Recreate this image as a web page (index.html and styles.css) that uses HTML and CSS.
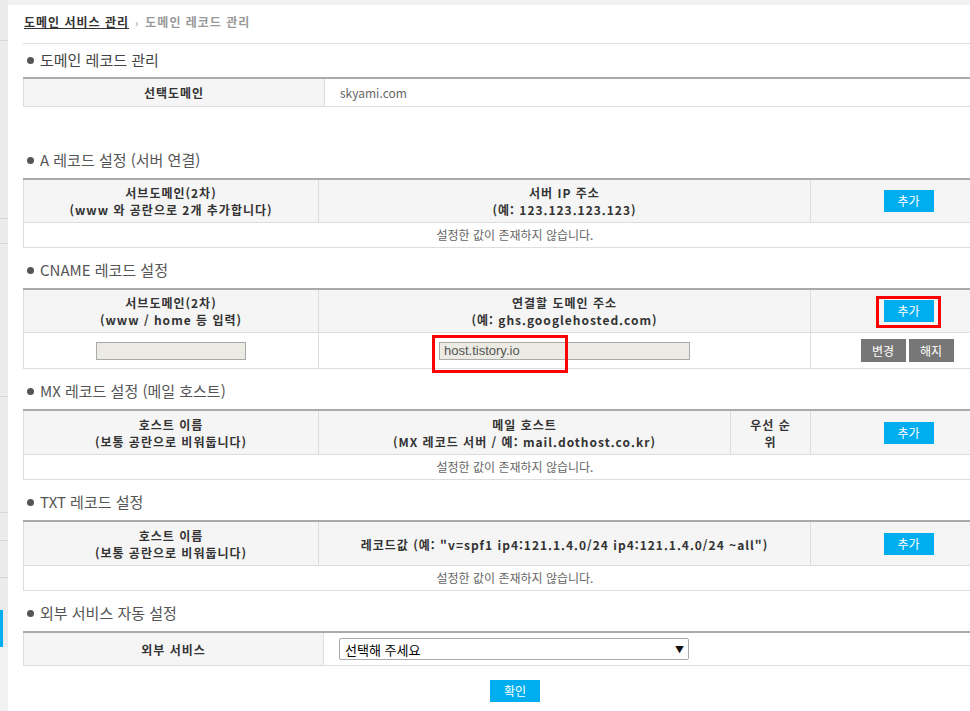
FILE: index.html
```html
<!DOCTYPE html>
<html lang="ko">
<head>
  <meta charset="UTF-8">
  <title>도메인 레코드 관리</title>
  <link rel="stylesheet" href="styles.css">
</head>
<body>
  <div class="page">
    <div class="side">
      <div class="side-item"></div>
      <div class="side-item"></div>
      <div class="side-item"></div>
      <div class="side-item"></div>
      <div class="side-item"></div>
      <div class="side-item"></div>
      <div class="side-item"></div>
      <div class="side-item"></div>
      <div class="side-item active"></div>
    </div>

    <div class="content">
      <div class="breadcrumb">
        <a href="#">도메인 서비스 관리</a><span class="sep">›</span><span class="current">도메인 레코드 관리</span>
      </div>

      <!-- 선택 도메인 -->
      <h3 class="sec-title first">도메인 레코드 관리</h3>
      <table class="rec">
        <colgroup><col class="c301"><col></colgroup>
        <tr>
          <th class="single">선택도메인</th>
          <td class="val">skyami.com</td>
        </tr>
      </table>

      <!-- A 레코드 -->
      <h3 class="sec-title wide">A 레코드 설정 (서버 연결)</h3>
      <table class="rec">
        <colgroup><col class="c295"><col><col class="c196"></colgroup>
        <tr>
          <th>서브도메인(2차)<br>(www 와 공란으로 2개 추가합니다)</th>
          <th>서버 IP 주소<br>(예: 123.123.123.123)</th>
          <th><button class="btn">추가</button></th>
        </tr>
        <tr>
          <td class="empty" colspan="3">설정한 값이 존재하지 않습니다.</td>
        </tr>
      </table>

      <!-- CNAME 레코드 -->
      <h3 class="sec-title">CNAME 레코드 설정</h3>
      <table class="rec">
        <colgroup><col class="c295"><col><col class="c196"></colgroup>
        <tr>
          <th>서브도메인(2차)<br>(www / home 등 입력)</th>
          <th>연결할 도메인 주소<br>(예: ghs.googlehosted.com)</th>
          <th><span class="mark mark-btn"><button class="btn">추가</button></span></th>
        </tr>
        <tr>
          <td class="inrow"><input class="fld" type="text" value="" disabled></td>
          <td class="inrow"><span class="mark mark-input"><input class="fld fld-long" type="text" value="host.tistory.io" disabled></span></td>
          <td class="inrow">
            <div class="btns">
              <button class="btn btn-gray">변경</button>
              <button class="btn btn-gray">해지</button>
            </div>
          </td>
        </tr>
      </table>

      <!-- MX 레코드 -->
      <h3 class="sec-title">MX 레코드 설정 (메일 호스트)</h3>
      <table class="rec tall">
        <colgroup><col class="c295"><col><col class="c80"><col class="c196"></colgroup>
        <tr>
          <th>호스트 이름<br>(보통 공란으로 비워둡니다)</th>
          <th>메일 호스트<br>(MX 레코드 서버 / 예: mail.dothost.co.kr)</th>
          <th>우선 순<br>위</th>
          <th><button class="btn">추가</button></th>
        </tr>
        <tr>
          <td class="empty" colspan="4">설정한 값이 존재하지 않습니다.</td>
        </tr>
      </table>

      <!-- TXT 레코드 -->
      <h3 class="sec-title">TXT 레코드 설정</h3>
      <table class="rec tall">
        <colgroup><col class="c295"><col><col class="c196"></colgroup>
        <tr>
          <th>호스트 이름<br>(보통 공란으로 비워둡니다)</th>
          <th>레코드값 (예: "v=spf1 ip4:121.1.4.0/24 ip4:121.1.4.0/24 ~all")</th>
          <th><button class="btn">추가</button></th>
        </tr>
        <tr>
          <td class="empty" colspan="3">설정한 값이 존재하지 않습니다.</td>
        </tr>
      </table>

      <!-- 외부 서비스 -->
      <h3 class="sec-title">외부 서비스 자동 설정</h3>
      <table class="rec">
        <colgroup><col class="c300"><col></colgroup>
        <tr>
          <th class="single">외부 서비스</th>
          <td class="val selrow">
            <div class="sel"><span>선택해 주세요</span><span class="caret">▼</span></div>
          </td>
        </tr>
      </table>

      <div class="confirm">
        <button class="btn">확인</button>
      </div>
    </div>
  </div>
</body>
</html>
```

FILE: styles.css
```css
body {
  margin: 0;
  background: #f2f2f2;
  font-family: "Noto Sans CJK KR", "Noto Sans", sans-serif;
  font-size: 12px;
  color: #666;
  overflow: hidden;
}

.page {
  display: flex;
  align-items: flex-start;
}

/* left menu edge */
.side {
  width: 8px;
  flex: none;
  display: flex;
  flex-direction: column;
  background: #ebebeb;
}

.side-item {
  border-bottom: 1px solid #d6d6d6;
}

.side-item:nth-child(1) { height: 40px; }
.side-item:nth-child(2) { height: 177px; }
.side-item:nth-child(3) { height: 24px; }
.side-item:nth-child(4) { height: 152px; }
.side-item:nth-child(5) { height: 115px; }
.side-item:nth-child(6) { height: 27px; }
.side-item:nth-child(7) { height: 36px; }
.side-item:nth-child(8) { height: 32px; border-bottom: 0; }

.side-item.active {
  height: 37px;
  border-bottom: 0;
  background: #00aeef;
  width: 3px;
}

.content {
  flex: none;
  width: 1000px;
  min-height: 706px;
  margin-top: 5px;
  padding-left: 15px;
  background: #fff;
}

.breadcrumb {
  height: 38px;
  line-height: 34px;
  padding-left: 1px;
  border-bottom: 1px solid #ddd;
  font-weight: bold;
  letter-spacing: 1px;
}

.breadcrumb a {
  color: #333;
  text-decoration: underline;
}

.sep {
  margin: 0 6px;
  font-size: 10px;
  color: #aaa;
}

.current {
  color: #999;
}

.sec-title {
  margin: 12px 0 8px;
  font-size: 15px;
  line-height: 20px;
  font-weight: normal;
  color: #555;
}

.sec-title::before {
  content: "";
  display: inline-block;
  width: 7px;
  height: 7px;
  margin: 0 6px 2px 4px;
  border-radius: 50%;
  background: #555;
  vertical-align: middle;
}

.sec-title.first {
  margin-top: 6px;
  margin-bottom: 7px;
  color: #444;
}

.sec-title.wide {
  margin-top: 43px;
}

/* record tables */
.rec {
  width: 984px;
  table-layout: fixed;
  border-collapse: collapse;
  border-top: 2px solid #aaa;
}

.rec th,
.rec td {
  border: 1px solid #ddd;
  text-align: center;
}

.rec th {
  padding: 4px 5px;
  background: #f5f5f5;
  color: #333;
  font-weight: bold;
  letter-spacing: 1px;
  line-height: 17px;
}

.rec.tall th {
  padding: 5px 5px 4px;
}

.rec th.single {
  padding: 5px;
}

.c301 { width: 301px; }
.c300 { width: 300px; }
.c295 { width: 295px; }
.c196 { width: 196px; }
.c80 { width: 80px; }

.rec td.val {
  padding: 0 15px;
  text-align: left;
  line-height: 27px;
}

.rec td.empty {
  padding: 0;
  line-height: 24px;
}

.rec td.inrow {
  height: 35px;
  padding: 0;
  line-height: 0;
}

.btn {
  width: 50px;
  height: 22px;
  padding: 0;
  border: 0;
  background: #00aeef;
  color: #fff;
  font-family: "Noto Sans CJK KR", sans-serif;
  font-size: 12px;
  line-height: 22px;
  vertical-align: middle;
  cursor: pointer;
}

.btn-gray {
  width: 45px;
  height: 23px;
  background: #777;
}

.btns {
  display: flex;
  justify-content: center;
  gap: 3px;
  padding-right: 3px;
}

.fld {
  box-sizing: border-box;
  width: 150px;
  height: 18px;
  padding: 0 4px;
  border: 1px solid #aaa;
  background: #ebebe4;
  color: #555;
  font-family: "Liberation Sans", Arial, sans-serif;
  font-size: 13px;
  vertical-align: middle;
}

.fld-long {
  width: 251px;
}

/* red highlight boxes */
.mark {
  position: relative;
  display: inline-block;
  line-height: 0;
  vertical-align: middle;
}

.mark .fld {
  display: block;
}

.mark::after {
  content: "";
  position: absolute;
  border: 3px solid #f00;
}

.mark-btn::after {
  left: -8px;
  top: -4px;
  right: -7px;
  bottom: -6px;
}

.mark-input::after {
  left: -7px;
  top: -7px;
  width: 130px;
  height: 32px;
}

.rec td.selrow {
  height: 32px;
  padding: 0 15px;
}

.sel {
  box-sizing: border-box;
  width: 350px;
  height: 22px;
  display: flex;
  align-items: center;
  justify-content: space-between;
  padding: 0 4px 0 5px;
  border: 1px solid #aaa;
  border-radius: 2px;
  background: #fff;
  color: #000;
  font-size: 13px;
  letter-spacing: 0;
}

.caret {
  font-size: 9px;
  color: #111;
}

.confirm {
  width: 984px;
  padding-top: 14px;
  text-align: center;
}
```
